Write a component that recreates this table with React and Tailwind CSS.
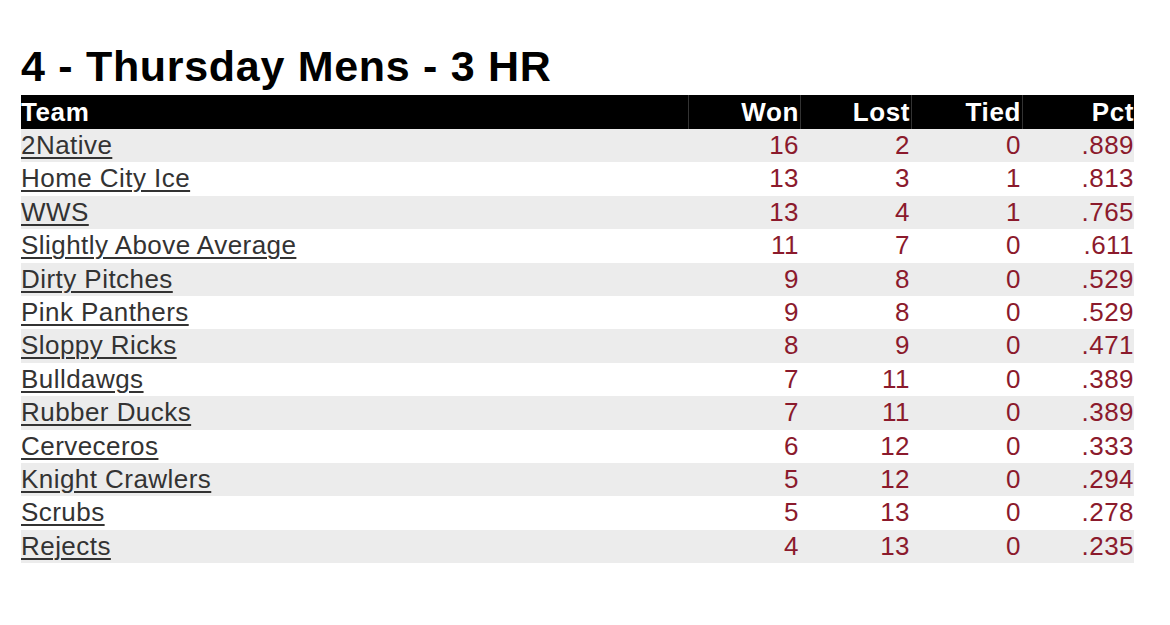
import React from 'react';

const teams = [
  ['2Native', 16, 2, 0, '.889'],
  ['Home City Ice', 13, 3, 1, '.813'],
  ['WWS', 13, 4, 1, '.765'],
  ['Slightly Above Average', 11, 7, 0, '.611'],
  ['Dirty Pitches', 9, 8, 0, '.529'],
  ['Pink Panthers', 9, 8, 0, '.529'],
  ['Sloppy Ricks', 8, 9, 0, '.471'],
  ['Bulldawgs', 7, 11, 0, '.389'],
  ['Rubber Ducks', 7, 11, 0, '.389'],
  ['Cerveceros', 6, 12, 0, '.333'],
  ['Knight Crawlers', 5, 12, 0, '.294'],
  ['Scrubs', 5, 13, 0, '.278'],
  ['Rejects', 4, 13, 0, '.235'],
];

const cols = 'grid grid-cols-[667px_112px_111px_111px_112px]';

function Row({ team, index }) {
  const [name, won, lost, tied, pct] = team;
  return (
    <div
      className={`${cols} leading-[33.4px] text-[26px] tracking-[0.45px] ${
        index % 2 === 0 ? 'bg-[#ececec]' : 'bg-white'
      }`}
    >
      <div>
        <a href="#" className="text-[#333333] underline decoration-[2px] underline-offset-[3px]">
          {name}
        </a>
      </div>
      <div className="text-right pr-px text-[#8b1a2c]">{won}</div>
      <div className="text-right pr-px text-[#8b1a2c]">{lost}</div>
      <div className="text-right pr-px text-[#8b1a2c]">{tied}</div>
      <div className="text-right text-[#8b1a2c]">{pct}</div>
    </div>
  );
}

export default function App() {
  return (
    <div className="w-[1170px] h-[625px] bg-white pt-[45px] pl-[21px] font-['Liberation_Sans',Arial,sans-serif]">
      <h1 className="text-[43px] leading-[43px] font-bold tracking-[0.7px] text-black mb-[7px]">
        4 - Thursday Mens - 3 HR
      </h1>
      <div className="w-[1113px]">
        <div className={`${cols} bg-black text-white font-bold text-[26px] tracking-[0.6px] leading-[34px]`}>
          <div>Team</div>
          <div className="text-right pr-px border-l border-[#333333]">Won</div>
          <div className="text-right pr-px border-l border-[#333333]">Lost</div>
          <div className="text-right pr-px border-l border-[#333333]">Tied</div>
          <div className="text-right border-l border-[#333333]">Pct</div>
        </div>
        {teams.map((team, i) => (
          <Row key={team[0]} team={team} index={i} />
        ))}
      </div>
    </div>
  );
}
